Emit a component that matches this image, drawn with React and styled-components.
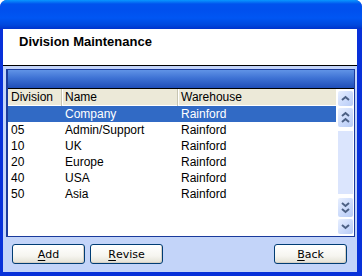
import React from "react";
import styled, { createGlobalStyle } from "styled-components";

const Global = createGlobalStyle`
  html, body { margin: 0; padding: 0; background: #ffffff; }
  body { width: 362px; height: 276px; overflow: hidden; }
`;

const Window = styled.div`
  width: 362px;
  height: 276px;
  display: flex;
  flex-direction: column;
  background: #0831d9;
  border-radius: 7px 7px 0 0;
  overflow: hidden;
  font-family: "Liberation Sans", Arial, sans-serif;
`;

const TitleBar = styled.div`
  height: 29px;
  flex: none;
  background: linear-gradient(
    180deg,
    #0997ff 0px,
    #0053ee 4px,
    #0050ee 10px,
    #0056f3 18px,
    #0048dd 25px,
    #0033cc 29px
  );
`;

const Frame = styled.div`
  flex: 1;
  display: flex;
  flex-direction: column;
  margin: 0 5px 4px 3px;
  background: #c3d4f9;
  min-height: 0;
`;

const Header = styled.div`
  height: 37px;
  flex: none;
  box-sizing: border-box;
  background: #ffffff;
  border-bottom: 1px solid #000000;
  padding: 5px 0 0 16px;
  font-family: "Liberation Sans", Arial, sans-serif;
  font-weight: bold;
  font-size: 13px;
  line-height: 15px;
  color: #000;
`;

const Content = styled.div`
  flex: 1;
  display: flex;
  flex-direction: column;
  padding: 3px 2px 0 3px;
`;

const Panel = styled.div`
  height: 166px;
  flex: none;
  display: flex;
  flex-direction: column;
  border: 1px solid #1a3a9c;
  border-left-width: 2px;
`;

const PanelBar = styled.div`
  height: 18px;
  flex: none;
  background: linear-gradient(180deg, #6093e6 0%, #3e72d4 45%, #1f4eb8 100%);
  border-bottom: 1px solid #000;
`;

const Grid = styled.div`
  flex: 1;
  display: flex;
  background: #ffffff;
  min-height: 0;
`;

const Table = styled.div`
  flex: 1;
  display: flex;
  flex-direction: column;
  font-size: 12px;
  color: #000;
`;

const HeadRow = styled.div`
  height: 16px;
  display: grid;
  grid-template-columns: 54px 116px 1fr;
  background: #ece9d8;
`;

const HeadCell = styled.div`
  padding-left: 3px;
  line-height: 17px;
  border-right: ${(p) => (p.$last ? "none" : "1px solid #c7c5b2")};
  box-shadow: ${(p) => (p.$first ? "none" : "inset 1px 0 0 #ffffff")};
  white-space: nowrap;
`;

const Row = styled.div`
  height: 16px;
  display: grid;
  grid-template-columns: 54px 116px 1fr;
  background: ${(p) => (p.$selected ? "#316ac5" : "transparent")};
  color: ${(p) => (p.$selected ? "#ffffff" : "#000000")};
  margin-top: ${(p) => (p.$selected ? "1px" : "0")};
`;

const Cell = styled.div`
  padding-left: 3px;
  line-height: 16px;
  white-space: nowrap;
`;

const ScrollCol = styled.div`
  width: 16px;
  flex: none;
  display: flex;
  flex-direction: column;
  align-items: center;
  padding: 2px 1px 2px 1px;
  gap: 2px;
`;

const ScrollBtn = styled.div`
  width: 15px;
  height: ${(p) => p.$h || 15}px;
  flex: none;
  border-radius: 2px;
  background: linear-gradient(135deg, #e8efff 0%, #c9d9fb 60%, #b7cbf5 100%);
  display: flex;
  align-items: center;
  justify-content: center;
`;

const Track = styled.div`
  width: 15px;
  flex: 1;
  background: #dbe5fd;
  margin: 2px 0;
`;

const ButtonRow = styled.div`
  display: flex;
  align-items: center;
  padding: 7px 8px 0 6px;
  gap: 5px;
`;

const Spacer = styled.div`
  flex: 1;
`;

const Button = styled.button`
  width: 73px;
  height: 20px;
  border: 1px solid #003c74;
  border-radius: 3px;
  background: linear-gradient(180deg, #ffffff 0%, #f6f5f0 60%, #e3e1d5 100%);
  font-family: "DejaVu Sans", Tahoma, sans-serif;
  font-size: 11px;
  color: #000;
  padding: 0;
  display: flex;
  align-items: center;
  justify-content: center;
  box-shadow: inset -1px -1px 0 #d6d0c5;
  u { text-decoration: underline; text-underline-offset: 2px; }
`;

const Chevron = ({ dir = "up", double = false }) => {
  const up = dir === "up";
  const one = (y) =>
    up ? `M4 ${y + 3} L7.5 ${y} L11 ${y + 3}` : `M4 ${y} L7.5 ${y + 3} L11 ${y}`;
  return (
    <svg width="15" height={double ? 18 : 15} viewBox={`0 0 15 ${double ? 18 : 15}`}>
      {double ? (
        <>
          <path d={one(4)} stroke="#4d6185" strokeWidth="2" fill="none" />
          <path d={one(10)} stroke="#4d6185" strokeWidth="2" fill="none" />
        </>
      ) : (
        <path d={one(6)} stroke="#4d6185" strokeWidth="2" fill="none" />
      )}
    </svg>
  );
};

const rows = [
  ["", "Company", "Rainford", true],
  ["05", "Admin/Support", "Rainford"],
  ["10", "UK", "Rainford"],
  ["20", "Europe", "Rainford"],
  ["40", "USA", "Rainford"],
  ["50", "Asia", "Rainford"],
];

export default function App() {
  return (
    <>
      <Global />
      <Window>
        <TitleBar />
        <Frame>
          <Header>Division Maintenance</Header>
          <Content>
            <Panel>
              <PanelBar />
              <Grid>
                <Table>
                  <HeadRow>
                    <HeadCell $first>Division</HeadCell>
                    <HeadCell>Name</HeadCell>
                    <HeadCell $last>Warehouse</HeadCell>
                  </HeadRow>
                  {rows.map(([d, n, w, s], i) => (
                    <Row key={i} $selected={s}>
                      <Cell>{d}</Cell>
                      <Cell>{n}</Cell>
                      <Cell>{w}</Cell>
                    </Row>
                  ))}
                </Table>
                <ScrollCol>
                  <ScrollBtn>
                    <Chevron dir="up" />
                  </ScrollBtn>
                  <ScrollBtn $h={19}>
                    <Chevron dir="up" double />
                  </ScrollBtn>
                  <Track />
                  <ScrollBtn $h={19}>
                    <Chevron dir="down" double />
                  </ScrollBtn>
                  <ScrollBtn>
                    <Chevron dir="down" />
                  </ScrollBtn>
                </ScrollCol>
              </Grid>
            </Panel>
            <ButtonRow>
              <Button>
                <u>A</u>dd
              </Button>
              <Button>
                <u>R</u>evise
              </Button>
              <Spacer />
              <Button>
                <u>B</u>ack
              </Button>
            </ButtonRow>
          </Content>
        </Frame>
      </Window>
    </>
  );
}
